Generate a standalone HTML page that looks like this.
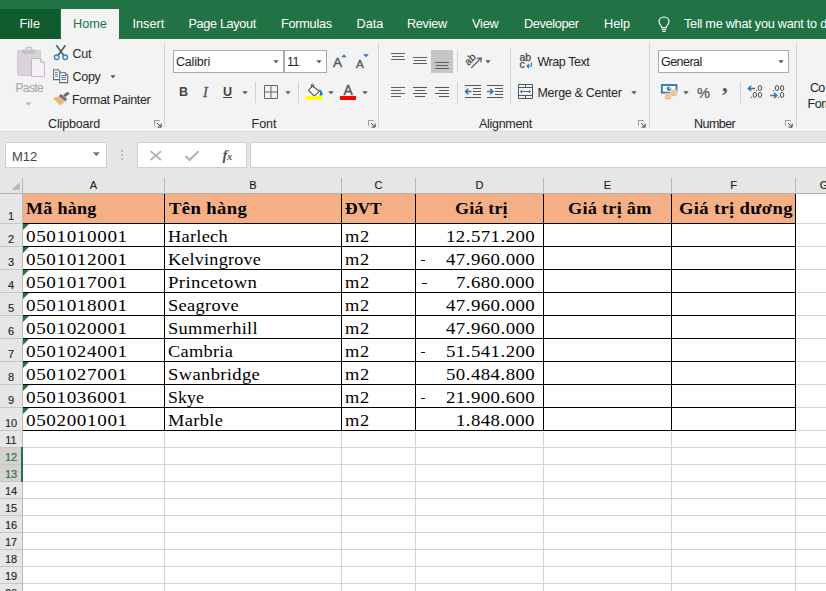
<!DOCTYPE html>
<html><head><meta charset="utf-8">
<style>
*{box-sizing:border-box;margin:0;padding:0}
html,body{width:826px;height:591px;overflow:hidden;background:#fff;font-family:"Liberation Sans",sans-serif;}
#app{position:relative;width:826px;height:591px;overflow:hidden;background:#fff}
.abs{position:absolute}
/* title/tab bar */
#tabs{left:0;top:0;width:826px;height:39px;background:#217346}
#filetab{left:0;top:9px;width:60px;height:30px;background:#105c2f}
#hometab{left:61px;top:9px;width:58px;height:30px;background:#f3f3f3}
.tab{position:absolute;top:17px;font-size:12.7px;color:#fff;white-space:nowrap;line-height:15px}
/* ribbon */
#ribbon{left:0;top:39px;width:826px;height:92px;background:#f3f3f3}
.rt{position:absolute;font-size:12.5px;color:#262626;white-space:nowrap;line-height:15px}
.sep{position:absolute;width:1px;background:#d2d2d2;top:43px;height:84px}
/* formula bar */
#fbar{left:0;top:131px;width:826px;height:47px;background:#e6e6e6}
.box{position:absolute;background:#fff;border:1px solid #d0d0d0}
/* grid */
#colhdr{left:0;top:178px;width:826px;height:16px;background:#e6e6e6}
.ch{position:absolute;top:179px;font-size:11px;color:#1e1e1e;line-height:13px;text-align:center;-webkit-text-stroke:0.15px #1e1e1e}
.rh{position:absolute;left:0;width:22px;font-size:11px;color:#1e1e1e;text-align:center;line-height:13px;-webkit-text-stroke:0.15px}
.cell{position:absolute;font-family:"Liberation Serif",serif;font-size:17.5px;color:#000;white-space:nowrap;line-height:20px;transform-origin:0 50%;-webkit-text-stroke:0}
.hd{-webkit-text-stroke:0}
.hd{font-weight:bold}
.vl{position:absolute;width:1px;background:#000}
.hl{position:absolute;height:1px;background:#000}
.gv{position:absolute;width:1px;background:#d4d4d4}
.gh{position:absolute;height:1px;background:#d4d4d4}
</style></head><body><div id="app">

<!-- TABS -->
<div id="tabs" class="abs"></div>
<div id="filetab" class="abs"></div>
<div id="hometab" class="abs"></div>
<div class="tab" style="left:19.5px">File</div>
<div class="tab" style="left:73px;color:#217346">Home</div>
<div class="tab" style="left:132.5px">Insert</div>
<div class="tab" style="left:188.5px;letter-spacing:-0.35px">Page Layout</div>
<div class="tab" style="left:281px;letter-spacing:-0.25px">Formulas</div>
<div class="tab" style="left:356.5px">Data</div>
<div class="tab" style="left:407px;letter-spacing:-0.3px">Review</div>
<div class="tab" style="left:472px;letter-spacing:-0.2px">View</div>
<div class="tab" style="left:524px;letter-spacing:-0.35px">Developer</div>
<div class="tab" style="left:604px">Help</div>
<svg class="abs" style="left:656px;top:14px" width="16" height="19" viewBox="0 0 16 19"><path d="M8 3 C4.8 3 3 5.2 3 7.6 C3 9.6 4.2 10.6 5.1 11.8 C5.5 12.3 5.6 12.9 5.6 13.6 H10.4 C10.4 12.9 10.5 12.3 10.9 11.8 C11.8 10.6 13 9.6 13 7.6 C13 5.2 11.2 3 8 3 Z M5.8 15.5 H10.2 M6.4 17.4 H9.6" fill="none" stroke="#fff" stroke-width="1.2"/></svg>
<div class="tab" style="left:684px;letter-spacing:-0.25px">Tell me what you want to d</div>

<!-- RIBBON -->
<div id="ribbon" class="abs"></div>
<div class="abs" style="left:0;top:131px;width:826px;height:1px;background:#dbdbdb;z-index:2"></div>
<!-- group separators -->
<div class="sep" style="left:164px"></div>
<div class="sep" style="left:378px"></div>
<div class="sep" style="left:649px"></div>
<div class="sep" style="left:796px"></div>
<!-- CLIPBOARD -->
<svg class="abs" style="left:15px;top:45px" width="32" height="34" viewBox="0 0 32 34">
  <rect x="2.5" y="5.5" width="23" height="25" rx="1" fill="#d9d4d9" stroke="#d0cbd0"/>
  <rect x="7.5" y="4.5" width="13" height="4.5" rx="0.5" fill="#c6c1c6"/>
  <rect x="11.5" y="2.5" width="5" height="3" rx="1" fill="#f3f3f3" stroke="#c6c1c6" stroke-width="1.4"/>
  <path d="M16.5 13.5 H25.5 L29.5 17.5 V31.5 H16.5 Z" fill="#f4f0f5" stroke="#c2bcc2"/>
  <path d="M25.5 13.5 V17.5 H29.5" fill="none" stroke="#c2bcc2"/>
</svg>
<div class="rt" style="left:15.5px;top:80.6px;color:#a3a3a3;font-size:12px;letter-spacing:-0.65px">Paste</div>
<svg class="abs" style="left:25px;top:102px" width="7" height="4"><path d="M0.5 0.5 H6.5 L3.5 3.5 Z" fill="#b0b0b0"/></svg>
<!-- Cut -->
<svg class="abs" style="left:53px;top:45px" width="16" height="16" viewBox="0 0 16 16">
  <path d="M3.4 0.3 L10.6 10.3 M12.4 0.3 L5.2 10.3" stroke="#5a5a5a" stroke-width="1.7" fill="none"/>
  <circle cx="3.7" cy="12.3" r="2.3" fill="none" stroke="#3a7cc2" stroke-width="1.3"/>
  <circle cx="12.2" cy="12.3" r="2.3" fill="none" stroke="#3a7cc2" stroke-width="1.3"/>
</svg>
<div class="rt" style="left:72.5px;top:47px;letter-spacing:-0.3px">Cut</div>
<!-- Copy -->
<svg class="abs" style="left:52px;top:68px" width="18" height="17" viewBox="0 0 18 17">
  <path d="M1.6 1.8 H6.2 L8.2 3.8 V11.6 H1.6 Z" fill="#fff" stroke="#6a6a6a" stroke-width="1.1"/>
  <path d="M3 4.3 H5.8 M3 6.3 H5.8 M3 8.3 H5.8" stroke="#2e75b6" stroke-width="0.95"/>
  <path d="M7.7 4.7 H13.2 L15.7 7.2 V14.6 H7.7 Z" fill="#fff" stroke="#6a6a6a" stroke-width="1.1"/>
  <path d="M13.2 4.7 V7.2 H15.7" fill="none" stroke="#6a6a6a" stroke-width="0.8"/>
  <path d="M9.3 7.6 H14 M9.3 9.5 H14 M9.3 11.5 H14" stroke="#2e75b6" stroke-width="0.95"/>
</svg>
<div class="rt" style="left:72.5px;top:70px;letter-spacing:-0.3px">Copy</div>
<svg class="abs" style="left:110px;top:75px" width="7" height="4"><path d="M0.3 0.3 H5.7 L3 3.3 Z" fill="#555"/></svg>
<!-- Format Painter -->
<svg class="abs" style="left:53px;top:91px" width="18" height="16" viewBox="0 0 18 16">
  <path d="M5.56 5.32 L0.1 7.2 L7.1 14.6 L12.36 10.56 Z" fill="#e8b96f"/>
  <path d="M9.85 4.34 L12.23 6.18 L16.79 2.52 L14.41 0.68 Z" fill="#6c6c6c"/>
  <path d="M5.56 5.32 L7.64 2.64 L14.44 7.88 L12.36 10.56 Z" fill="#707070" stroke="#f3f3f3" stroke-width="0.4"/>
</svg>
<div class="rt" style="left:72px;top:92.7px;letter-spacing:-0.3px">Format Painter</div>
<div class="rt" style="left:48px;top:116.6px;letter-spacing:-0.15px">Clipboard</div>
<svg class="abs lau" style="left:153.5px;top:119.5px" width="8" height="8" viewBox="0 0 9 9"><path d="M0.5 6.5 V0.5 H6.5" fill="none" stroke="#8c8c8c" stroke-width="1"/><path d="M3.5 3.5 L7.8 7.8 M8 4 V8 H4" fill="none" stroke="#3a3a3a" stroke-width="1.1"/></svg>
<!-- FONT -->
<div class="box" style="left:173px;top:50px;width:111px;height:23px;border-color:#ababab"></div>
<div class="box" style="left:284px;top:50px;width:43px;height:23px;border-color:#ababab"></div>
<div class="rt" style="left:176px;top:55px;letter-spacing:-0.2px">Calibri</div>
<div class="rt" style="left:287px;top:55px;letter-spacing:-0.6px">11</div>
<svg class="abs" style="left:273px;top:60px" width="7" height="4"><path d="M0.3 0.3 H5.7 L3 3.3 Z" fill="#555"/></svg>
<svg class="abs" style="left:316px;top:60px" width="7" height="4"><path d="M0.3 0.3 H5.7 L3 3.3 Z" fill="#555"/></svg>
<div class="rt" style="left:333px;top:54.5px;font-size:13.6px;line-height:16px;color:#555;-webkit-text-stroke:0.4px #555">A</div>
<svg class="abs" style="left:340.5px;top:54px" width="7" height="4"><path d="M0.2 3.2 L3 0.2 L5.8 3.2 Z" fill="#2e75b6"/></svg>
<div class="rt" style="left:356px;top:56.5px;font-size:11.6px;line-height:14px;color:#555;-webkit-text-stroke:0.35px #555">A</div>
<svg class="abs" style="left:362.5px;top:54px" width="7" height="4"><path d="M0.2 0.2 L3 3.2 L5.8 0.2 Z" fill="#2e75b6"/></svg>
<div class="rt" style="left:179px;top:84.5px;font-weight:bold;font-size:12.5px;color:#444">B</div>
<div class="rt" style="left:203px;top:84.5px;font-style:italic;font-family:'Liberation Serif',serif;font-size:14.5px;color:#555;-webkit-text-stroke:0.35px #555">I</div>
<div class="rt" style="left:223px;top:84.5px;font-size:12.5px;color:#444;font-weight:bold">U</div>
<div class="abs" style="left:223px;top:97px;width:9px;height:1px;background:#444"></div>
<svg class="abs" style="left:242px;top:91px" width="7" height="4"><path d="M0.3 0.3 H5.7 L3 3.3 Z" fill="#555"/></svg>
<div class="abs" style="left:255px;top:82px;width:1px;height:21px;background:#d2d2d2"></div>
<svg class="abs" style="left:264px;top:84.5px" width="14" height="14" viewBox="0 0 14 14"><path d="M0.5 0.5 H13.5 V13.5 H0.5 Z M7 0.5 V13.5 M0.5 7 H13.5" fill="none" stroke="#666" stroke-width="1"/></svg>
<svg class="abs" style="left:285px;top:91px" width="7" height="4"><path d="M0.3 0.3 H5.7 L3 3.3 Z" fill="#555"/></svg>
<div class="abs" style="left:298px;top:82px;width:1px;height:21px;background:#d2d2d2"></div>
<!-- fill -->
<svg class="abs" style="left:305px;top:82px" width="19" height="19" viewBox="0 0 19 19">
  <path d="M7.4 4 L14.3 9.4 L9.2 13.9 L3.6 8.4 Z" fill="#fff" stroke="#555" stroke-width="1.1"/>
  <path d="M6.4 6 V3 Q6.4 2 7.4 2 Q8.4 2 8.4 3 V5.4" stroke="#555" stroke-width="1" fill="none"/>
  <path d="M14 6.8 C17 8.5 18 11 17.4 13.4 L14.4 13.4 C15.4 11.4 15.2 9 14 6.8 Z" fill="#2e75b6"/>
  <rect x="0.8" y="14.2" width="16.6" height="3.8" fill="#ffff00"/>
</svg>
<svg class="abs" style="left:328px;top:91px" width="7" height="4"><path d="M0.3 0.3 H5.7 L3 3.3 Z" fill="#555"/></svg>
<div class="rt" style="left:343.5px;top:83.3px;font-size:13.8px;line-height:16px;color:#555;-webkit-text-stroke:0.4px #555">A</div>
<div class="abs" style="left:340px;top:96.2px;width:16px;height:3.8px;background:#ff0000"></div>
<svg class="abs" style="left:362px;top:91px" width="7" height="4"><path d="M0.3 0.3 H5.7 L3 3.3 Z" fill="#555"/></svg>
<div class="rt" style="left:251.5px;top:116.6px">Font</div>
<svg class="abs lau" style="left:367.5px;top:119.5px" width="8" height="8" viewBox="0 0 9 9"><path d="M0.5 6.5 V0.5 H6.5" fill="none" stroke="#8c8c8c" stroke-width="1"/><path d="M3.5 3.5 L7.8 7.8 M8 4 V8 H4" fill="none" stroke="#3a3a3a" stroke-width="1.1"/></svg>
<!-- ALIGNMENT -->
<div class="abs" style="left:431px;top:50px;width:22px;height:23px;background:#c6c6c6"></div>
<svg class="abs" style="left:390px;top:50px" width="66" height="24" viewBox="0 0 66 24">
 <g stroke="#606060" stroke-width="1" fill="none">
  <path d="M1 3.5 H15 M2 6.5 H14 M1 9.5 H15"/>
  <path d="M23 7.5 H37 M24 10.5 H36 M23 13.5 H37"/>
  <path d="M45 12.5 H59 M46 15.5 H58 M45 18.5 H59"/>
 </g>
</svg>
<div class="abs" style="left:457px;top:51px;width:1px;height:21px;background:#d2d2d2"></div>
<svg class="abs" style="left:462px;top:50px" width="22" height="22" viewBox="0 0 22 22">
  <text transform="translate(6.4,16) rotate(-45)" font-family="Liberation Sans" font-size="10.5" fill="#444" stroke="#444" stroke-width="0.2">ab</text>
  <path d="M9.3 17.9 L19 8.2" stroke="#444" stroke-width="1.1" fill="none"/>
  <path d="M14.8 8.3 L19.2 8 L18.9 12.4" stroke="#444" stroke-width="1.1" fill="none"/>
</svg>
<svg class="abs" style="left:485px;top:60px" width="7" height="4"><path d="M0.3 0.3 H5.7 L3 3.3 Z" fill="#555"/></svg>
<div class="abs" style="left:510px;top:49px;width:1px;height:55px;background:#d2d2d2"></div>
<!-- wrap text -->
<div class="rt" style="left:519.5px;top:53.5px;font-size:10.5px;line-height:7px;color:#444;-webkit-text-stroke:0.25px #444">ab<br>c</div>
<svg class="abs" style="left:526px;top:61.5px" width="7" height="7" viewBox="0 0 7 7"><path d="M5.5 0.5 V4 H1.2 M3 2 L1 4 L3 6" fill="none" stroke="#2e75b6" stroke-width="1.1"/></svg>
<div class="rt" style="left:537.5px;top:54.6px;letter-spacing:-0.45px">Wrap Text</div>
<!-- row 2 -->
<svg class="abs" style="left:390px;top:84px" width="66" height="14" viewBox="0 0 66 14">
 <g stroke="#555" stroke-width="1" fill="none">
  <path d="M1 3.5 H15 M1 6.5 H11 M1 9.5 H15 M1 12.5 H11" stroke="#606060"/>
  <path d="M23 3.5 H37 M25 6.5 H35 M23 9.5 H37 M25 12.5 H35"/>
  <path d="M45 3.5 H59 M49 6.5 H59 M45 9.5 H59 M49 12.5 H59"/>
 </g>
</svg>
<div class="abs" style="left:457px;top:82px;width:1px;height:21px;background:#d2d2d2"></div>
<svg class="abs" style="left:464px;top:84px" width="40" height="15" viewBox="0 0 40 15">
 <g stroke="#555" stroke-width="1" fill="none">
  <path d="M1 1.5 H17 M9 4.5 H17 M9 7.5 H17 M9 10.5 H17 M1 13.5 H17"/>
  <path d="M23 1.5 H39 M31 4.5 H39 M31 7.5 H39 M31 10.5 H39 M23 13.5 H39"/>
 </g>
 <g stroke="#2e75b6" stroke-width="1.6" fill="none">
  <path d="M7.5 7.5 H1.8 M4.3 4.8 L1.6 7.5 L4.3 10.2"/>
  <path d="M23 7.5 H28.7 M26.2 4.8 L28.9 7.5 L26.2 10.2"/>
 </g>
</svg>
<!-- merge -->
<svg class="abs" style="left:518px;top:84px" width="16" height="16" viewBox="0 0 16 16">
  <path d="M0.5 0.5 H14.5 V14.5 H0.5 Z M0.5 3.5 H14.5 M0.5 11.5 H14.5 M7.5 0.5 V3.5 M7.5 11.5 V14.5" fill="none" stroke="#555" stroke-width="1"/>
  <path d="M2.5 7.5 H12.5 M4 6 L2.5 7.5 L4 9 M11 6 L12.5 7.5 L11 9" fill="none" stroke="#2e75b6" stroke-width="1"/>
</svg>
<div class="rt" style="left:537.5px;top:85.9px;letter-spacing:-0.3px">Merge &amp; Center</div>
<svg class="abs" style="left:631px;top:91px" width="7" height="4"><path d="M0.3 0.3 H5.7 L3 3.3 Z" fill="#555"/></svg>
<div class="rt" style="left:479px;top:116.6px;letter-spacing:-0.3px">Alignment</div>
<svg class="abs lau" style="left:637.5px;top:119.5px" width="8" height="8" viewBox="0 0 9 9"><path d="M0.5 6.5 V0.5 H6.5" fill="none" stroke="#8c8c8c" stroke-width="1"/><path d="M3.5 3.5 L7.8 7.8 M8 4 V8 H4" fill="none" stroke="#3a3a3a" stroke-width="1.1"/></svg>
<!-- NUMBER -->
<div class="box" style="left:658px;top:50px;width:131px;height:23px;border-color:#ababab"></div>
<div class="rt" style="left:661px;top:54.6px;letter-spacing:-0.55px">General</div>
<svg class="abs" style="left:778px;top:60px" width="7" height="4"><path d="M0.3 0.3 H5.7 L3 3.3 Z" fill="#555"/></svg>
<svg class="abs" style="left:660px;top:83px" width="19" height="18" viewBox="0 0 19 18">
  <rect x="1.8" y="2" width="14.6" height="7.6" fill="#fff" stroke="#2e75b6" stroke-width="1.8"/>
  <ellipse cx="9" cy="5.6" rx="2.3" ry="2.2" fill="#2e75b6"/>
  <circle cx="9.8" cy="5" r="0.9" fill="#fff"/>
  <g fill="#e8b672" stroke="#f3f3f3" stroke-width="0.5">
   <ellipse cx="13.6" cy="8" rx="3.6" ry="1.3"/>
   <ellipse cx="13.6" cy="10" rx="3.6" ry="1.3"/>
   <ellipse cx="13.6" cy="12" rx="3.6" ry="1.3"/>
   <ellipse cx="8" cy="11.2" rx="3.6" ry="1.3"/>
   <ellipse cx="8" cy="13.2" rx="3.6" ry="1.3"/>
   <ellipse cx="8" cy="15.2" rx="3.6" ry="1.3"/>
  </g>
</svg>
<svg class="abs" style="left:683px;top:91px" width="7" height="4"><path d="M0.3 0.3 H5.7 L3 3.3 Z" fill="#555"/></svg>
<div class="rt" style="left:697px;top:84.3px;font-size:14.6px;line-height:18px;color:#555;-webkit-text-stroke:0.2px #555;transform:scaleX(1.0);transform-origin:0 0">%</div>
<div class="rt" style="left:722px;top:72.2px;font-size:23px;line-height:24px;color:#555;font-weight:bold;font-family:'Liberation Serif',serif">,</div>
<div class="abs" style="left:740px;top:82px;width:1px;height:21px;background:#d2d2d2"></div>
<svg class="abs" style="left:746px;top:83px" width="40" height="17" viewBox="0 0 40 17">
 <g fill="none" stroke="#454545" stroke-width="0.95">
  <ellipse cx="13.85" cy="5.05" rx="1.7" ry="2.5"/>
  <ellipse cx="8.85" cy="11.9" rx="1.7" ry="2.5"/><ellipse cx="14" cy="11.9" rx="1.7" ry="2.5"/>
  <ellipse cx="30.95" cy="5.05" rx="1.7" ry="2.5"/><ellipse cx="36.1" cy="5.05" rx="1.7" ry="2.5"/>
  <ellipse cx="36.1" cy="11.9" rx="1.7" ry="2.5"/>
 </g>
 <g fill="#454545"><rect x="10" y="7" width="1.1" height="1.1"/><rect x="5" y="13.8" width="1.1" height="1.1"/><rect x="27.1" y="7" width="1.1" height="1.1"/><rect x="32.2" y="13.8" width="1.1" height="1.1"/></g>
 <g fill="none" stroke="#2e75b6" stroke-width="1.5">
  <path d="M9 5.4 H2.8 M5.2 2.8 L2.4 5.4 L5.2 8"/>
  <path d="M24.2 12.4 H30.4 M28 9.8 L30.8 12.4 L28 15"/>
 </g>
</svg>
<div class="rt" style="left:694px;top:116.6px;letter-spacing:-0.55px">Number</div>
<svg class="abs lau" style="left:785px;top:119.5px" width="8" height="8" viewBox="0 0 9 9"><path d="M0.5 6.5 V0.5 H6.5" fill="none" stroke="#8c8c8c" stroke-width="1"/><path d="M3.5 3.5 L7.8 7.8 M8 4 V8 H4" fill="none" stroke="#3a3a3a" stroke-width="1.1"/></svg>
<div class="rt" style="left:810px;top:81px;letter-spacing:-0.7px">Co</div>
<div class="rt" style="left:807.5px;top:97px;letter-spacing:-0.4px">Form</div>

<!--ENDRIBBON-->

<!-- FORMULA BAR -->
<div id="fbar" class="abs"></div>
<div class="box" style="left:5px;top:142px;width:102px;height:26px"></div>
<div class="box" style="left:137px;top:142px;width:110px;height:26px"></div>
<div class="box" style="left:250px;top:142px;width:580px;height:26px"></div>
<div class="rt" style="left:12px;top:148.8px;font-size:13px;color:#444">M12</div>
<svg class="abs" style="left:92px;top:152px" width="9" height="5"><path d="M0.8 0.3 H8 L4.4 4.2 Z" fill="#777"/></svg>
<div class="abs" style="left:121px;top:150px;width:2px;height:2px;background:#bdbdbd"></div>
<div class="abs" style="left:121px;top:154px;width:2px;height:2px;background:#bdbdbd"></div>
<div class="abs" style="left:121px;top:158px;width:2px;height:2px;background:#bdbdbd"></div>
<svg class="abs" style="left:149px;top:150px" width="14" height="12" viewBox="0 0 14 12"><path d="M1.5 1.2 L12 10 M12 1.2 L1.5 10" stroke="#b0b0b0" stroke-width="1.7" fill="none"/></svg>
<svg class="abs" style="left:184px;top:150px" width="16" height="12" viewBox="0 0 16 12"><path d="M1.5 6 L5.5 10 L14.5 1.2" stroke="#b0b0b0" stroke-width="2" fill="none"/></svg>
<div class="rt" style="left:222.5px;top:147px;font-family:'Liberation Serif',serif;font-style:italic;font-weight:bold;font-size:15px;line-height:17px;color:#555;letter-spacing:-0.5px">f<span style="font-size:10.5px">x</span></div>

<!-- GRID -->
<div id="colhdr" class="abs"></div>
<div id="grid">
<div class="abs" style="left:23px;top:194px;width:772px;height:29px;background:#f4b084"></div>
<div class="gv" style="left:164px;top:431px;height:160px"></div>
<div class="gv" style="left:341px;top:431px;height:160px"></div>
<div class="gv" style="left:415px;top:431px;height:160px"></div>
<div class="gv" style="left:543px;top:431px;height:160px"></div>
<div class="gv" style="left:671px;top:431px;height:160px"></div>
<div class="gv" style="left:795px;top:431px;height:160px"></div>
<div class="gh" style="left:796px;top:223px;width:30px"></div>
<div class="gh" style="left:796px;top:246px;width:30px"></div>
<div class="gh" style="left:796px;top:269px;width:30px"></div>
<div class="gh" style="left:796px;top:292px;width:30px"></div>
<div class="gh" style="left:796px;top:315px;width:30px"></div>
<div class="gh" style="left:796px;top:338px;width:30px"></div>
<div class="gh" style="left:796px;top:361px;width:30px"></div>
<div class="gh" style="left:796px;top:384px;width:30px"></div>
<div class="gh" style="left:796px;top:407px;width:30px"></div>
<div class="gh" style="left:796px;top:430px;width:30px"></div>
<div class="gh" style="left:23px;top:447px;width:803px"></div>
<div class="gh" style="left:23px;top:464px;width:803px"></div>
<div class="gh" style="left:23px;top:481px;width:803px"></div>
<div class="gh" style="left:23px;top:498px;width:803px"></div>
<div class="gh" style="left:23px;top:515px;width:803px"></div>
<div class="gh" style="left:23px;top:532px;width:803px"></div>
<div class="gh" style="left:23px;top:549px;width:803px"></div>
<div class="gh" style="left:23px;top:566px;width:803px"></div>
<div class="gh" style="left:23px;top:583px;width:803px"></div>
<div class="gh" style="left:23px;top:600px;width:803px"></div>
<div class="vl" style="left:164px;top:194px;height:237px"></div>
<div class="vl" style="left:341px;top:194px;height:237px"></div>
<div class="vl" style="left:415px;top:194px;height:237px"></div>
<div class="vl" style="left:543px;top:194px;height:237px"></div>
<div class="vl" style="left:671px;top:194px;height:237px"></div>
<div class="vl" style="left:795px;top:194px;height:237px"></div>
<div class="hl" style="left:23px;top:223px;width:773px"></div>
<div class="hl" style="left:23px;top:246px;width:773px"></div>
<div class="hl" style="left:23px;top:269px;width:773px"></div>
<div class="hl" style="left:23px;top:292px;width:773px"></div>
<div class="hl" style="left:23px;top:315px;width:773px"></div>
<div class="hl" style="left:23px;top:338px;width:773px"></div>
<div class="hl" style="left:23px;top:361px;width:773px"></div>
<div class="hl" style="left:23px;top:384px;width:773px"></div>
<div class="hl" style="left:23px;top:407px;width:773px"></div>
<div class="hl" style="left:23px;top:430px;width:773px"></div>
<div class="abs" style="left:0;top:194px;width:22px;height:397px;background:#e6e6e6"></div>
<div class="abs" style="left:0;top:448px;width:22px;height:33px;background:#d2d2d2"></div>
<div class="abs" style="left:22px;top:178px;width:1px;height:413px;background:#b8b8b8"></div>
<div class="abs" style="left:0;top:193px;width:826px;height:1px;background:#b0b0b0"></div>
<div class="abs" style="left:0;top:223px;width:22px;height:1px;background:#c6c6c6"></div>
<div class="abs" style="left:0;top:246px;width:22px;height:1px;background:#c6c6c6"></div>
<div class="abs" style="left:0;top:269px;width:22px;height:1px;background:#c6c6c6"></div>
<div class="abs" style="left:0;top:292px;width:22px;height:1px;background:#c6c6c6"></div>
<div class="abs" style="left:0;top:315px;width:22px;height:1px;background:#c6c6c6"></div>
<div class="abs" style="left:0;top:338px;width:22px;height:1px;background:#c6c6c6"></div>
<div class="abs" style="left:0;top:361px;width:22px;height:1px;background:#c6c6c6"></div>
<div class="abs" style="left:0;top:384px;width:22px;height:1px;background:#c6c6c6"></div>
<div class="abs" style="left:0;top:407px;width:22px;height:1px;background:#c6c6c6"></div>
<div class="abs" style="left:0;top:430px;width:22px;height:1px;background:#c6c6c6"></div>
<div class="abs" style="left:0;top:447px;width:22px;height:1px;background:#c6c6c6"></div>
<div class="abs" style="left:0;top:464px;width:22px;height:1px;background:#c6c6c6"></div>
<div class="abs" style="left:0;top:481px;width:22px;height:1px;background:#c6c6c6"></div>
<div class="abs" style="left:0;top:498px;width:22px;height:1px;background:#c6c6c6"></div>
<div class="abs" style="left:0;top:515px;width:22px;height:1px;background:#c6c6c6"></div>
<div class="abs" style="left:0;top:532px;width:22px;height:1px;background:#c6c6c6"></div>
<div class="abs" style="left:0;top:549px;width:22px;height:1px;background:#c6c6c6"></div>
<div class="abs" style="left:0;top:566px;width:22px;height:1px;background:#c6c6c6"></div>
<div class="abs" style="left:0;top:583px;width:22px;height:1px;background:#c6c6c6"></div>
<div class="abs" style="left:0;top:600px;width:22px;height:1px;background:#c6c6c6"></div>
<div class="abs" style="left:21px;top:447px;width:2px;height:35px;background:#217346"></div>
<div class="abs" style="left:164px;top:178px;width:1px;height:15px;background:#b8b8b8"></div>
<div class="abs" style="left:341px;top:178px;width:1px;height:15px;background:#b8b8b8"></div>
<div class="abs" style="left:415px;top:178px;width:1px;height:15px;background:#b8b8b8"></div>
<div class="abs" style="left:543px;top:178px;width:1px;height:15px;background:#b8b8b8"></div>
<div class="abs" style="left:671px;top:178px;width:1px;height:15px;background:#b8b8b8"></div>
<div class="abs" style="left:795px;top:178px;width:1px;height:15px;background:#b8b8b8"></div>
<div class="ch" style="left:23px;width:141px">A</div>
<div class="ch" style="left:165px;width:176px">B</div>
<div class="ch" style="left:342px;width:73px">C</div>
<div class="ch" style="left:416px;width:127px">D</div>
<div class="ch" style="left:544px;width:127px">E</div>
<div class="ch" style="left:672px;width:123px">F</div>
<div class="ch" style="left:818px;width:12px">G</div>
<div class="rh" style="top:210px;color:#262626">1</div>
<div class="rh" style="top:233px;color:#262626">2</div>
<div class="rh" style="top:256px;color:#262626">3</div>
<div class="rh" style="top:279px;color:#262626">4</div>
<div class="rh" style="top:302px;color:#262626">5</div>
<div class="rh" style="top:325px;color:#262626">6</div>
<div class="rh" style="top:348px;color:#262626">7</div>
<div class="rh" style="top:371px;color:#262626">8</div>
<div class="rh" style="top:394px;color:#262626">9</div>
<div class="rh" style="top:417px;color:#262626">10</div>
<div class="rh" style="top:434px;color:#262626">11</div>
<div class="rh" style="top:451px;color:#217346">12</div>
<div class="rh" style="top:468px;color:#217346">13</div>
<div class="rh" style="top:485px;color:#262626">14</div>
<div class="rh" style="top:502px;color:#262626">15</div>
<div class="rh" style="top:519px;color:#262626">16</div>
<div class="rh" style="top:536px;color:#262626">17</div>
<div class="rh" style="top:553px;color:#262626">18</div>
<div class="rh" style="top:570px;color:#262626">19</div>
<div class="rh" style="top:587px;color:#262626">20</div>
<svg class="abs" style="left:11px;top:182px" width="9" height="8"><path d="M8.7 0.2 V7.8 H0.6 Z" fill="#b6b6b6"/></svg>
<div class="cell hd" style="left:26px;top:198.3px;letter-spacing:0.24px;transform:scaleX(1.034)">Mã hàng</div>
<div class="cell hd" style="left:168.5px;top:198.3px;letter-spacing:0.39px;transform:scaleX(1.063)">Tên hàng</div>
<div class="cell hd" style="left:345px;top:198.3px;letter-spacing:-0.08px;transform:scaleX(0.993)">ĐVT</div>
<div class="cell hd" style="left:455px;top:198.3px;letter-spacing:0.16px;transform:scaleX(1.031)">Giá trị</div>
<div class="cell hd" style="left:568px;top:198.3px;letter-spacing:0.24px;transform:scaleX(1.044)">Giá trị âm</div>
<div class="cell hd" style="left:679px;top:198.3px;letter-spacing:0.33px;transform:scaleX(1.062)">Giá trị dương</div>
<div class="cell" style="left:26px;top:225.7px;letter-spacing:0.55px;transform:scaleX(1.094)">0501010001</div>
<div class="cell" style="left:168px;top:225.7px;letter-spacing:0.27px;transform:scaleX(1.047)">Harlech</div>
<div class="cell" style="left:345px;top:225.7px;letter-spacing:0.69px;transform:scaleX(1.050)">m2</div>
<div class="cell" style="left:445.7px;top:225.7px;letter-spacing:0.41px;transform:scaleX(1.077)">12.571.200</div>
<svg class="abs" style="left:23px;top:224px" width="6" height="6"><path d="M0 0 L6 0 L0 6 Z" fill="#217346"/></svg>
<div class="cell" style="left:26px;top:248.7px;letter-spacing:0.55px;transform:scaleX(1.094)">0501012001</div>
<div class="cell" style="left:168px;top:248.7px;letter-spacing:0.20px;transform:scaleX(1.037)">Kelvingrove</div>
<div class="cell" style="left:345px;top:248.7px;letter-spacing:0.69px;transform:scaleX(1.050)">m2</div>
<div class="cell" style="left:445.7px;top:248.7px;letter-spacing:0.41px;transform:scaleX(1.077)">47.960.000</div>
<div class="abs" style="left:420.6px;top:259.8px;width:4.8px;height:1.3px;background:#111"></div>
<svg class="abs" style="left:23px;top:247px" width="6" height="6"><path d="M0 0 L6 0 L0 6 Z" fill="#217346"/></svg>
<div class="cell" style="left:26px;top:271.7px;letter-spacing:0.55px;transform:scaleX(1.094)">0501017001</div>
<div class="cell" style="left:168px;top:271.7px;letter-spacing:0.38px;transform:scaleX(1.070)">Princetown</div>
<div class="cell" style="left:345px;top:271.7px;letter-spacing:0.69px;transform:scaleX(1.050)">m2</div>
<div class="cell" style="left:455.7px;top:271.7px;letter-spacing:0.39px;transform:scaleX(1.073)">7.680.000</div>
<div class="abs" style="left:422.4px;top:282.8px;width:4.8px;height:1.3px;background:#111"></div>
<svg class="abs" style="left:23px;top:270px" width="6" height="6"><path d="M0 0 L6 0 L0 6 Z" fill="#217346"/></svg>
<div class="cell" style="left:26px;top:294.7px;letter-spacing:0.55px;transform:scaleX(1.094)">0501018001</div>
<div class="cell" style="left:168px;top:294.7px;letter-spacing:0.30px;transform:scaleX(1.051)">Seagrove</div>
<div class="cell" style="left:345px;top:294.7px;letter-spacing:0.69px;transform:scaleX(1.050)">m2</div>
<div class="cell" style="left:445.7px;top:294.7px;letter-spacing:0.41px;transform:scaleX(1.077)">47.960.000</div>
<svg class="abs" style="left:23px;top:293px" width="6" height="6"><path d="M0 0 L6 0 L0 6 Z" fill="#217346"/></svg>
<div class="cell" style="left:26px;top:317.7px;letter-spacing:0.55px;transform:scaleX(1.094)">0501020001</div>
<div class="cell" style="left:168px;top:317.7px;letter-spacing:0.29px;transform:scaleX(1.051)">Summerhill</div>
<div class="cell" style="left:345px;top:317.7px;letter-spacing:0.69px;transform:scaleX(1.050)">m2</div>
<div class="cell" style="left:445.7px;top:317.7px;letter-spacing:0.41px;transform:scaleX(1.077)">47.960.000</div>
<svg class="abs" style="left:23px;top:316px" width="6" height="6"><path d="M0 0 L6 0 L0 6 Z" fill="#217346"/></svg>
<div class="cell" style="left:26px;top:340.7px;letter-spacing:0.55px;transform:scaleX(1.094)">0501024001</div>
<div class="cell" style="left:168px;top:340.7px;letter-spacing:0.29px;transform:scaleX(1.046)">Cambria</div>
<div class="cell" style="left:345px;top:340.7px;letter-spacing:0.69px;transform:scaleX(1.050)">m2</div>
<div class="cell" style="left:445.7px;top:340.7px;letter-spacing:0.41px;transform:scaleX(1.077)">51.541.200</div>
<div class="abs" style="left:420.6px;top:351.8px;width:4.8px;height:1.3px;background:#111"></div>
<svg class="abs" style="left:23px;top:339px" width="6" height="6"><path d="M0 0 L6 0 L0 6 Z" fill="#217346"/></svg>
<div class="cell" style="left:26px;top:363.7px;letter-spacing:0.55px;transform:scaleX(1.094)">0501027001</div>
<div class="cell" style="left:168px;top:363.7px;letter-spacing:0.34px;transform:scaleX(1.060)">Swanbridge</div>
<div class="cell" style="left:345px;top:363.7px;letter-spacing:0.69px;transform:scaleX(1.050)">m2</div>
<div class="cell" style="left:445.7px;top:363.7px;letter-spacing:0.41px;transform:scaleX(1.077)">50.484.800</div>
<svg class="abs" style="left:23px;top:362px" width="6" height="6"><path d="M0 0 L6 0 L0 6 Z" fill="#217346"/></svg>
<div class="cell" style="left:26px;top:386.7px;letter-spacing:0.55px;transform:scaleX(1.094)">0501036001</div>
<div class="cell" style="left:168px;top:386.7px;letter-spacing:0.11px;transform:scaleX(1.014)">Skye</div>
<div class="cell" style="left:345px;top:386.7px;letter-spacing:0.69px;transform:scaleX(1.050)">m2</div>
<div class="cell" style="left:445.7px;top:386.7px;letter-spacing:0.41px;transform:scaleX(1.077)">21.900.600</div>
<div class="abs" style="left:420.6px;top:397.8px;width:4.8px;height:1.3px;background:#111"></div>
<svg class="abs" style="left:23px;top:385px" width="6" height="6"><path d="M0 0 L6 0 L0 6 Z" fill="#217346"/></svg>
<div class="cell" style="left:26px;top:409.7px;letter-spacing:0.55px;transform:scaleX(1.094)">0502001001</div>
<div class="cell" style="left:168px;top:409.7px;letter-spacing:0.33px;transform:scaleX(1.052)">Marble</div>
<div class="cell" style="left:345px;top:409.7px;letter-spacing:0.69px;transform:scaleX(1.050)">m2</div>
<div class="cell" style="left:455.7px;top:409.7px;letter-spacing:0.39px;transform:scaleX(1.073)">1.848.000</div>
<svg class="abs" style="left:23px;top:408px" width="6" height="6"><path d="M0 0 L6 0 L0 6 Z" fill="#217346"/></svg>
</div><!--ENDGRID-->

</div></body></html>
